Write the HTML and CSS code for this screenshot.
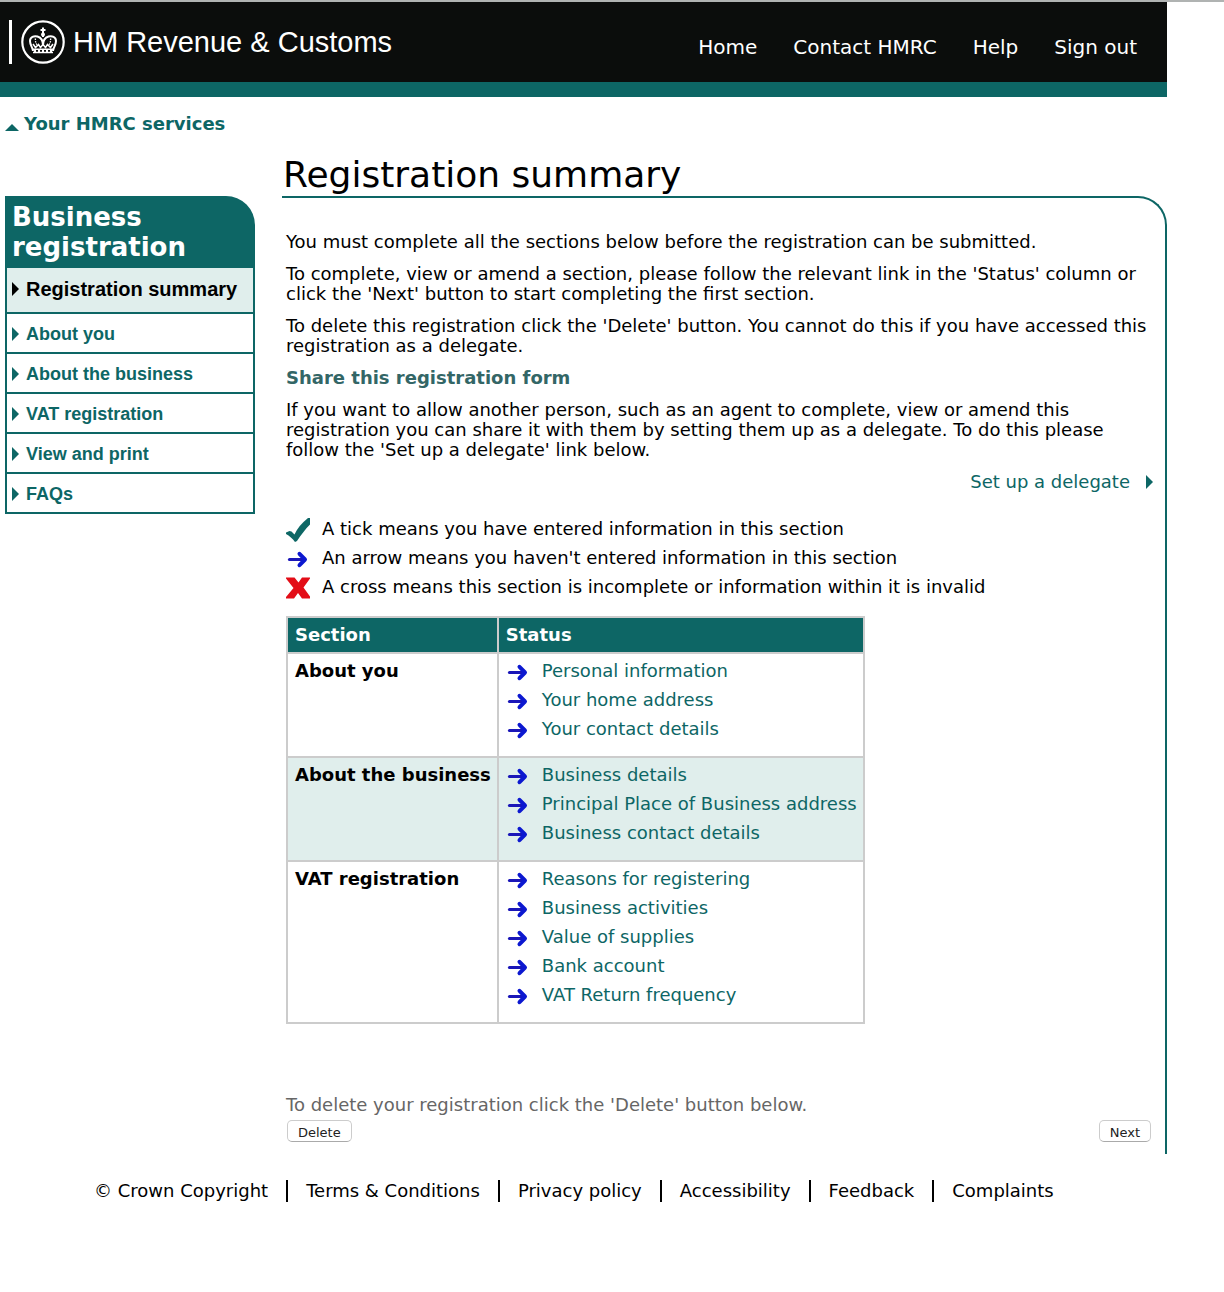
FILE: index.html
```html
<!DOCTYPE html>
<html lang="en">
<head>
<meta charset="utf-8">
<title>HM Revenue &amp; Customs: Registration summary</title>
<link rel="stylesheet" href="styles.css">
</head>
<body>
<svg class="sprite" aria-hidden="true">
  <symbol id="arrow" viewBox="0 0 24 24">
    <path d="M3.500 12.500H17" fill="none" stroke="#1a16b8" stroke-width="3.200" stroke-linecap="round"/>
    <path d="M13.500 6.800L19 12.500L13.500 18.200" fill="none" stroke="#0c18d0" stroke-width="4" stroke-linecap="round" stroke-linejoin="round"/>
  </symbol>
  <symbol id="tick" viewBox="0 0 24 24">
    <path d="M0 14.500L3.500 13L5.500 13.500L8.500 16.500C11 11 15.500 5 22 0H24V6.500C19 11.500 15 17 11 23L9 24C6.500 20.500 3.500 18 0 16Z" fill="#0e6765"/>
  </symbol>
  <symbol id="cross" viewBox="0 0 24 21">
    <path d="M0 0H8.500L12.500 5L16 0H24V1L17.500 10L24 19V21H16L12 15.500L8 21H0V19.500L7.500 10.500L0 1Z" fill="#e30d17"/>
  </symbol>
  <symbol id="point" viewBox="0 0 7 14">
    <path d="M0 0L7 7L0 14Z" fill="currentColor"/>
  </symbol>
</svg>
<div class="page">
  <header class="masthead">
    <a class="logo" href="#">
      <svg class="crown" viewBox="0 0 44 44" aria-hidden="true" fill="none" stroke="#fff">
        <circle cx="22" cy="22" r="20.700" stroke-width="2.200"/>
        <path d="M12 31C11.500 27 9 25 9 21C9 17 13 15.500 16.500 16.500C19.500 17.500 22 20 22 25C22 20 24.500 17.500 27.500 16.500C31 15.500 35 17 35 21C35 25 32.500 27 32 31" stroke-width="2"/>
        <path d="M22 11V17M19.500 10H24.500M22 7.500V12" stroke-width="2"/>
        <path d="M14.500 18.500C14 21 15 23 16 25M29.500 18.500C30 21 29 23 28 25" stroke-width="1.300" stroke-dasharray="1.500 1"/>
        <path d="M12 24L14.500 27.500L17.500 24.500L19.500 27.500L22 24.500L24.500 27.500L26.500 24.500L29.500 27.500L32 24" stroke-width="1.500"/>
        <path d="M12 29.200H32M12 32.500H32" stroke-width="1.600"/>
        <path d="M13 30.900H32" stroke-width="2" stroke-dasharray="2 2"/>
        <circle cx="22" cy="14.500" r="2" fill="#fff" stroke="none"/>
      </svg>
      <span>HM Revenue &amp; Customs</span>
    </a>
    <nav class="top-nav" aria-label="Site">
      <a href="#">Home</a>
      <a href="#">Contact HMRC</a>
      <a href="#">Help</a>
      <a href="#">Sign out</a>
    </nav>
  </header>

  <a class="services" href="#"><svg viewBox="0 0 14 7" aria-hidden="true"><path d="M0 7L7 0L14 7Z" fill="currentColor"/></svg>Your HMRC services</a>

  <div class="columns">
    <nav class="side-nav" aria-labelledby="side-title">
      <h2 id="side-title">Business registration</h2>
      <ul>
        <li class="current"><a href="#" aria-current="page"><svg aria-hidden="true"><use href="#point"/></svg>Registration summary</a></li>
        <li><a href="#"><svg aria-hidden="true"><use href="#point"/></svg>About you</a></li>
        <li><a href="#"><svg aria-hidden="true"><use href="#point"/></svg>About the business</a></li>
        <li><a href="#"><svg aria-hidden="true"><use href="#point"/></svg>VAT registration</a></li>
        <li><a href="#"><svg aria-hidden="true"><use href="#point"/></svg>View and print</a></li>
        <li><a href="#"><svg aria-hidden="true"><use href="#point"/></svg>FAQs</a></li>
      </ul>
    </nav>

    <main>
      <h1>Registration summary</h1>
      <div class="panel">
        <p>You must complete all the sections below before the registration can be submitted.</p>
        <p>To complete, view or amend a section, please follow the relevant link in the 'Status' column or click the 'Next' button to start completing the first section.</p>
        <p>To delete this registration click the 'Delete' button. You cannot do this if you have accessed this registration as a delegate.</p>
        <h2>Share this registration form</h2>
        <p class="share">If you want to allow another person, such as an agent to complete, view or amend this registration you can share it with them by setting them up as a delegate. To do this please follow the 'Set up a delegate' link below.</p>
        <a class="delegate" href="#">Set up a delegate<svg aria-hidden="true"><use href="#point"/></svg></a>

        <ul class="status-list key">
          <li><svg aria-hidden="true"><use href="#tick"/></svg>A tick means you have entered information in this section</li>
          <li><svg aria-hidden="true"><use href="#arrow"/></svg>An arrow means you haven't entered information in this section</li>
          <li><svg aria-hidden="true"><use href="#cross"/></svg>A cross means this section is incomplete or information within it is invalid</li>
        </ul>

        <table>
          <thead>
            <tr><th scope="col">Section</th><th scope="col">Status</th></tr>
          </thead>
          <tbody>
            <tr>
              <th scope="row">About you</th>
              <td><ul class="status-list">
                <li><svg aria-hidden="true"><use href="#arrow"/></svg><a href="#">Personal information</a></li>
                <li><svg aria-hidden="true"><use href="#arrow"/></svg><a href="#">Your home address</a></li>
                <li><svg aria-hidden="true"><use href="#arrow"/></svg><a href="#">Your contact details</a></li>
              </ul></td>
            </tr>
            <tr>
              <th scope="row">About the business</th>
              <td><ul class="status-list">
                <li><svg aria-hidden="true"><use href="#arrow"/></svg><a href="#">Business details</a></li>
                <li><svg aria-hidden="true"><use href="#arrow"/></svg><a href="#">Principal Place of Business address</a></li>
                <li><svg aria-hidden="true"><use href="#arrow"/></svg><a href="#">Business contact details</a></li>
              </ul></td>
            </tr>
            <tr>
              <th scope="row">VAT registration</th>
              <td><ul class="status-list">
                <li><svg aria-hidden="true"><use href="#arrow"/></svg><a href="#">Reasons for registering</a></li>
                <li><svg aria-hidden="true"><use href="#arrow"/></svg><a href="#">Business activities</a></li>
                <li><svg aria-hidden="true"><use href="#arrow"/></svg><a href="#">Value of supplies</a></li>
                <li><svg aria-hidden="true"><use href="#arrow"/></svg><a href="#">Bank account</a></li>
                <li><svg aria-hidden="true"><use href="#arrow"/></svg><a href="#">VAT Return frequency</a></li>
              </ul></td>
            </tr>
          </tbody>
        </table>

        <p class="delete-note">To delete your registration click the 'Delete' button below.</p>
        <div class="actions">
          <button type="button">Delete</button>
          <button type="button">Next</button>
        </div>
      </div>
    </main>
  </div>

  <footer>
    <span>© Crown Copyright</span>
    <a href="#">Terms &amp; Conditions</a>
    <a href="#">Privacy policy</a>
    <a href="#">Accessibility</a>
    <a href="#">Feedback</a>
    <a href="#">Complaints</a>
  </footer>
</div>
</body>
</html>
```
FILE: styles.css
```css
:root {
  --teal: #0d6665;
  --tint: #e0eeec;
  --rule: #ccc;
}

* {
  box-sizing: border-box;
}

body {
  margin: 0;
  border-top: 2px solid #b0b3b2;
  background: #fff;
  color: #000;
  font: 18px/20px Verdana, "DejaVu Sans", sans-serif;
}

a {
  color: var(--teal);
  text-decoration: none;
}

ul {
  margin: 0;
  padding: 0;
  list-style: none;
}

.sprite {
  position: absolute;
  width: 0;
  height: 0;
}

.page {
  margin-right: 57px;
}

.masthead {
  display: flex;
  align-items: center;
  justify-content: space-between;
  height: 95px;
  padding: 0 30px 0 9px;
  border-bottom: 15px solid var(--teal);
  background: #0b0d0c;
}

.masthead a {
  color: #fff;
}

.logo {
  display: flex;
  align-items: center;
  gap: 8px;
  padding-left: 9px;
  border-left: 3px solid #fff;
  font: 29px/44px "Liberation Sans", Arial, sans-serif;
}

.crown {
  width: 44px;
  height: 44px;
}

.top-nav {
  display: flex;
  gap: 36px;
  padding-top: 10px;
  font-size: 20px;
}

.services {
  display: flex;
  align-items: center;
  gap: 5px;
  padding: 17px 5px 0;
  font-weight: bold;
}

.services svg {
  width: 14px;
  height: 7px;
  margin-top: 6px;
}

.columns {
  display: grid;
  grid-template-columns: 250px 1fr;
  gap: 27px;
  padding-left: 5px;
}

.side-nav {
  align-self: start;
  margin-top: 62px;
}

.side-nav h2 {
  margin: 0;
  padding: 6px 7px;
  border-top-right-radius: 29px;
  background: var(--teal);
  color: #fff;
  font-size: 26px;
  line-height: 30px;
}

.side-nav ul {
  border: solid var(--teal);
  border-width: 0 2px;
  font: bold 18px/36px "Liberation Sans", Arial, sans-serif;
}

.side-nav li {
  border-bottom: 2px solid var(--teal);
}

.side-nav a {
  display: flex;
  align-items: center;
  gap: 7px;
  padding: 2px 0 0 5px;
}

.side-nav svg {
  width: 7px;
  height: 14px;
}

.side-nav .current a {
  padding: 0 0 2px 5px;
  background: var(--tint);
  color: #000;
  font-size: 20px;
  line-height: 42px;
}

h1 {
  margin: 20px 0 0;
  padding-left: 1px;
  font-size: 36px;
  font-weight: normal;
  line-height: 42px;
}

.panel {
  padding: 34px 12px 12px 4px;
  border: solid var(--teal);
  border-width: 2px 2px 0 0;
  border-top-right-radius: 29px;
}

.panel p,
.panel h2 {
  margin: 0 0 12px;
}

.panel h2 {
  color: #336666;
  font-size: 18px;
}

.panel .share {
  padding-right: 32px;
}

.delegate {
  display: flex;
  align-items: center;
  justify-content: flex-end;
  gap: 16px;
  margin-bottom: 22px;
}

.delegate svg {
  width: 7px;
  height: 14px;
}

.status-list li {
  display: flex;
  align-items: center;
  gap: 12px;
  line-height: 29px;
}

.status-list svg {
  width: 24px;
  height: 24px;
  margin-top: 3px;
}

table {
  margin: 15px 0 71px;
  border-collapse: collapse;
  text-align: left;
}

th,
td {
  padding: 2px 6px 13px 7px;
  border: 2px solid var(--rule);
  line-height: 29px;
  vertical-align: top;
}

thead th {
  padding-bottom: 3px;
  background: var(--teal);
  color: #fff;
}

tbody tr:nth-child(even) {
  background: var(--tint);
}

.panel .delete-note {
  margin-bottom: 5px;
  color: #666;
}

.actions {
  display: flex;
  justify-content: space-between;
  padding: 0 2px 0 1px;
}

button {
  height: 22px;
  padding: 4px 10px 0;
  border: 1px solid #ccc;
  border-bottom-color: #aaa;
  border-radius: 5px;
  background: #fff;
  color: #222;
  font: 13px/16px "DejaVu Sans", sans-serif;
}

footer {
  display: flex;
  flex-wrap: wrap;
  padding: 26px 0 90px 94px;
  line-height: 22px;
}

footer a {
  margin-left: 18px;
  padding-left: 18px;
  border-left: 2px solid #000;
  color: #000;
}
```
